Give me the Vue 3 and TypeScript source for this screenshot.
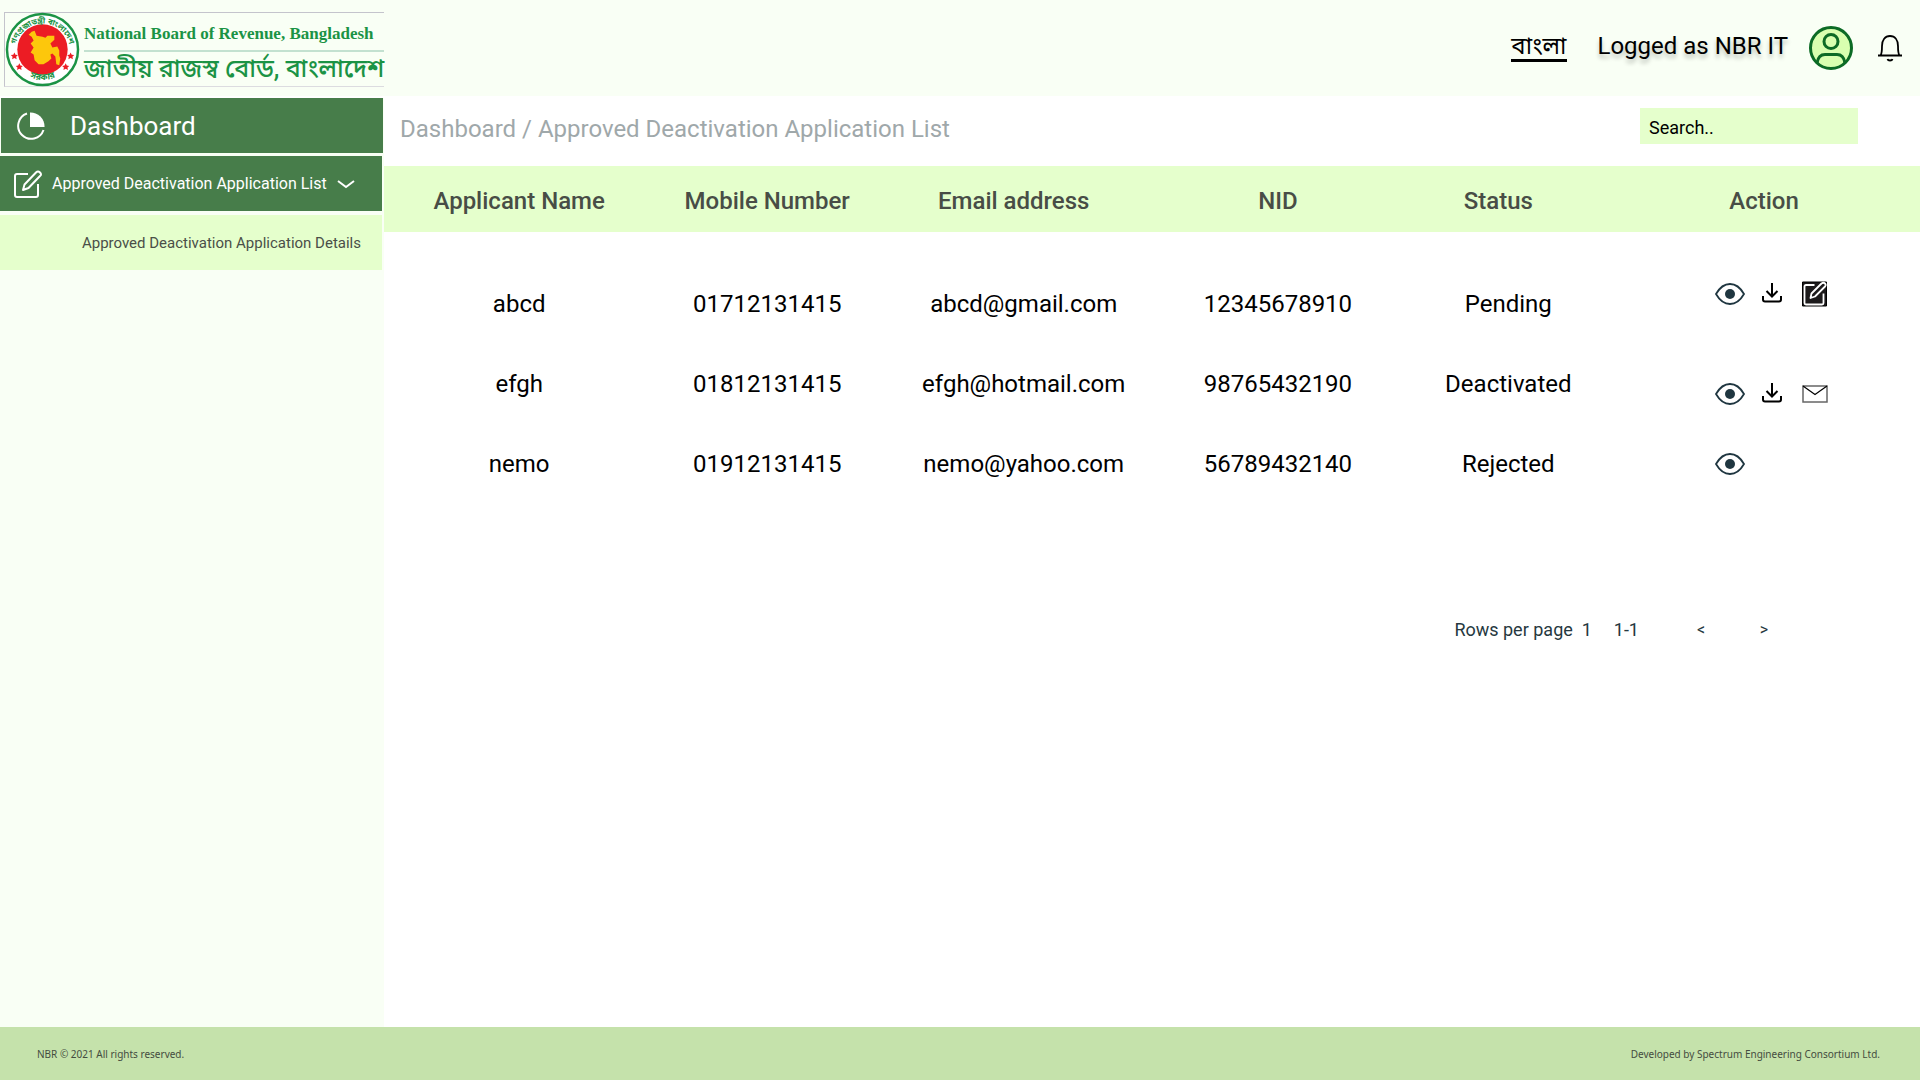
<script setup lang="ts">
import { ref } from 'vue'

type Action = 'view' | 'download' | 'edit' | 'mail'

interface Application {
  name: string
  mobile: string
  email: string
  nid: string
  status: string
  actions: Action[]
  align: 'top' | 'middle' | 'bottom'
}

const search = ref('')
const rowsPerPage = ref(1)

const applications: Application[] = [
  { name: 'abcd', mobile: '01712131415', email: 'abcd@gmail.com', nid: '12345678910', status: 'Pending', actions: ['view', 'download', 'edit'], align: 'top' },
  { name: 'efgh', mobile: '01812131415', email: 'efgh@hotmail.com', nid: '98765432190', status: 'Deactivated', actions: ['view', 'download', 'mail'], align: 'bottom' },
  { name: 'nemo', mobile: '01912131415', email: 'nemo@yahoo.com', nid: '56789432140', status: 'Rejected', actions: ['view'], align: 'middle' },
]
</script>

<template>
  <div class="page">
    <header class="topbar">
      <a class="logo" href="#" aria-label="National Board of Revenue">
        <svg class="emblem" viewBox="0 0 76 76" aria-hidden="true">
          <defs>
            <path id="arc-top" d="M10.500 45A28 28 0 1 1 65.500 45" />
            <path id="arc-bottom" d="M14 58A32 32 0 0 0 62 58" />
          </defs>
          <circle cx="38" cy="38" r="36" fill="#fff" stroke="#1b9345" stroke-width="2.500" />
          <circle cx="38" cy="38" r="25.500" fill="#ec1c24" />
          <path
            fill="#fdc70c"
            d="M27 20l3-1 2 5 6 1 3 1 2-2 7 0 0 4-4 4 2 4 5-1 2 4 0 5 1 3-1 7-3-1-1-8-3-3-2 1 1 4-3 3-5 3-5 0-4-4-1-6-3-2 3-5-3-4 3-3-2-4-3-2z"
          />
          <g fill="#ec1c24">
            <path id="star" d="M9.500 41l1.100 2.300 2.500.3-1.800 1.700.5 2.500-2.300-1.200-2.300 1.200.5-2.500-1.800-1.700 2.500-.3z" />
            <use href="#star" x="5" y="11" />
            <use href="#star" x="57" />
            <use href="#star" x="52" y="11" />
          </g>
          <g class="emblem-text" fill="#1b9345" text-anchor="middle">
            <text font-size="8"><textPath href="#arc-top" startOffset="50%">গণপ্রজাতন্ত্রী বাংলাদেশ</textPath></text>
            <text font-size="9"><textPath href="#arc-bottom" startOffset="50%">সরকার</textPath></text>
          </g>
        </svg>
        <span class="logo-names">
          <span class="logo-en">National Board of Revenue, Bangladesh</span>
          <span class="logo-bn" lang="bn">জাতীয় রাজস্ব বোর্ড, বাংলাদেশ</span>
        </span>
      </a>
      <div class="account">
        <a class="language" href="#" lang="bn">বাংলা</a>
        <span class="user">Logged as NBR IT</span>
        <button class="icon-button avatar" type="button" aria-label="Profile">
          <svg width="44" height="44" viewBox="0 0 44 44" fill="none" stroke="#0c6b25" stroke-width="3">
            <circle cx="22" cy="22" r="20.500" fill="#d9ffb0" />
            <circle cx="22" cy="15.500" r="7" />
            <path d="M8 37C9 31 12 28.500 16 28.500H28C32 28.500 35 31 36 37" />
          </svg>
        </button>
        <button class="icon-button" type="button" aria-label="Notifications">
          <svg width="26" height="28" viewBox="0 0 26 28" fill="none" stroke="#000" stroke-width="1.800">
            <path d="M1 21.500H25M3.500 21.500C5 19.500 5 17 5 12C5 6 8 2 13 2S21 6 21 12C21 17 21 19.500 22.500 21.500" />
            <path d="M10.500 25C11 27 15 27 15.500 25" />
          </svg>
        </button>
      </div>
    </header>

    <div class="body">
      <nav class="sidebar">
        <a class="nav-item nav-dashboard" href="#">
          <svg width="28" height="28" viewBox="0 0 28 28" aria-hidden="true">
            <path d="M10 1.500A13 13 0 1 0 26.500 18" fill="none" stroke="#fff" stroke-width="2" />
            <path d="M13 0.500A14 14 0 0 1 27.500 15H13z" fill="#fff" />
          </svg>
          Dashboard
        </a>
        <a class="nav-item nav-list" href="#">
          <svg width="28" height="28" viewBox="0 0 28 28" fill="none" stroke="#fff" stroke-width="2" stroke-linejoin="round" aria-hidden="true">
            <path d="M14 4H3Q1 4 1 6V25Q1 27 3 27H22Q24 27 24 25V14" />
            <path d="M9 20L10.500 14.500L22 2.500Q24 .5 26 2.500T26 6L14.500 18z" />
          </svg>
          <span>Approved Deactivation Application List</span>
          <svg width="18" height="10" viewBox="0 0 18 10" fill="none" stroke="#fff" stroke-width="2" aria-hidden="true">
            <path d="M1 2L9 8L17 2" />
          </svg>
        </a>
        <a class="nav-item nav-details" href="#">Approved Deactivation Application Details</a>
      </nav>

      <main class="content">
        <div class="toolbar">
          <h1 class="breadcrumb">Dashboard / Approved Deactivation Application List</h1>
          <input v-model="search" class="search" type="text" placeholder="Search.." aria-label="Search" />
        </div>

        <table class="applications">
          <colgroup>
            <col class="col-name" />
            <col class="col-mobile" />
            <col class="col-email" />
            <col class="col-nid" />
            <col class="col-status" />
            <col class="col-action" />
          </colgroup>
          <thead>
            <tr>
              <th scope="col">Applicant Name</th>
              <th scope="col">Mobile Number</th>
              <th scope="col" class="inset">Email address</th>
              <th scope="col">NID</th>
              <th scope="col" class="inset">Status</th>
              <th scope="col" class="inset">Action</th>
            </tr>
          </thead>
          <tbody>
            <tr v-for="row in applications" :key="row.nid">
              <td>{{ row.name }}</td>
              <td>{{ row.mobile }}</td>
              <td>{{ row.email }}</td>
              <td>{{ row.nid }}</td>
              <td>{{ row.status }}</td>
              <td class="action-cell" :class="row.align">
                <div class="actions">
                  <button v-for="action in row.actions" :key="action" class="icon-button" type="button" :aria-label="action">
                    <svg v-if="action === 'view'" width="30" height="24" viewBox="0 0 30 24" fill="none" stroke="#1f3640" stroke-width="1.800">
                      <path d="M1 12C5 5 10 2 15 2S25 5 29 12C25 19 20 22 15 22S5 19 1 12z" />
                      <circle cx="15" cy="12" r="5" fill="#1f3640" stroke="none" />
                    </svg>
                    <svg v-else-if="action === 'download'" width="23" height="22" viewBox="0 0 23 22" fill="none" stroke="#000" stroke-width="2">
                      <path d="M10 0V13M4.500 8L10 13.500L15.500 8M1 13V16.500Q1 18.500 3 18.500H17Q19 18.500 19 16.500V13" />
                    </svg>
                    <svg v-else-if="action === 'edit'" width="26" height="26" viewBox="0 0 26 26" fill="none" stroke="#fff" stroke-width="1.800" stroke-linejoin="round">
                      <rect width="24" height="24" fill="#1c1a1b" stroke="#000" stroke-width="1" x=".5" y="1" />
                      <path d="M12.500 4H4Q2.500 4 2.500 5.500V22Q2.500 23.500 4 23.500H20Q21.500 23.500 21.500 22V12.500" />
                      <path d="M8.500 17L9.500 12.500L19.500 2.500Q21.500 1 23 2.500T23 5.500L13 15.500z" />
                    </svg>
                    <svg v-else width="26" height="18" viewBox="0 0 26 18" fill="none" stroke="#000">
                      <rect x="1" y="1" width="24" height="16" stroke="#666" stroke-width="1.500" />
                      <path d="M1 1L13 9.500L25 1" stroke-width="1.200" />
                    </svg>
                  </button>
                </div>
              </td>
            </tr>
          </tbody>
        </table>

        <div class="pagination">
          <label for="rows-per-page">Rows per page</label>
          <select id="rows-per-page" v-model="rowsPerPage">
            <option :value="1">1</option>
          </select>
          <span class="range">1-1</span>
          <button class="pager" type="button" aria-label="Previous page">&lt;</button>
          <button class="pager" type="button" aria-label="Next page">&gt;</button>
        </div>
      </main>
    </div>

    <footer class="footer">
      <span>NBR © 2021 All rights reserved.</span>
      <span>Developed by Spectrum Engineering Consortium Ltd.</span>
    </footer>
  </div>
</template>

<style>
body {
  background: #fff;
}
</style>

<style scoped>
.page {
  display: flex;
  flex-direction: column;
  min-height: 100vh;
  font-family: Roboto, "Noto Sans Bengali", "Noto Sans", sans-serif;
  font-size: 24px;
  color: #000;
}
.page * {
  box-sizing: border-box;
}
a {
  color: inherit;
  text-decoration: none;
}
svg {
  display: block;
  flex: none;
}
.icon-button {
  padding: 0;
  border: 0;
  background: none;
  cursor: pointer;
}
.topbar {
  display: flex;
  justify-content: space-between;
  height: 96px;
  background: #f9fff5;
}
.logo {
  display: flex;
  align-items: center;
  width: 380px;
  height: 75px;
  margin: 12px 0 0 4px;
  border: 1px solid #c4c4cc;
  border-right: 0;
  border-bottom-color: #dcdce0;
  color: #1b9345;
}
.emblem {
  width: 75px;
  height: 75px;
}
.emblem-text {
  font-family: "Noto Sans Bengali", sans-serif;
  font-weight: 700;
}
.logo-names {
  display: flex;
  flex: 1;
  flex-direction: column;
  min-width: 0;
  margin-left: 4px;
  white-space: nowrap;
}
.logo-en {
  padding-top: 4px;
  border-bottom: 2px solid #c3e1d0;
  font: 700 17px/32px "Liberation Serif", serif;
}
.logo-bn {
  font-size: 25px;
  font-weight: 500;
  line-height: 34px;
}
.account {
  display: flex;
  align-items: center;
  padding-right: 17px;
}
.language {
  margin-right: 31px;
  border-bottom: 3px solid #000;
  line-height: 25px;
}
.user {
  margin-right: 21px;
  padding-bottom: 4px;
  text-shadow: 0 4px 4px rgba(0, 0, 0, 0.25);
}
.avatar {
  margin-right: 24px;
}
.body {
  display: flex;
  flex: 1;
}
.sidebar {
  display: flex;
  flex: none;
  flex-direction: column;
  width: 384px;
  border-top: 2px solid #fff;
  background: #f9fff5;
}
.nav-item {
  display: flex;
  align-items: center;
  height: 55px;
  margin-right: 2px;
  background: #477d4a;
  color: #fff;
}
.nav-dashboard {
  gap: 25px;
  margin: 0 1px 3px;
  padding-left: 16px;
  font-size: 26px;
}
.nav-list {
  gap: 10px;
  margin-bottom: 4px;
  padding-left: 14px;
  font-size: 16px;
}
.nav-details {
  justify-content: flex-end;
  padding-right: 21px;
  background: #e5ffcc;
  color: #4a4f48;
  font-size: 15px;
}
.content {
  flex: 1;
  min-width: 0;
}
.toolbar {
  display: flex;
  align-items: center;
  justify-content: space-between;
  height: 70px;
  padding: 0 62px 10px 16px;
}
.breadcrumb {
  margin: 0;
  padding-top: 6px;
  color: #9fa8aa;
  font-size: 24px;
  font-weight: 400;
}
.search {
  width: 218px;
  height: 36px;
  padding: 2px 9px 0;
  border: 0;
  border-radius: 0;
  background: #e5ffcc;
  color: #000;
  font: 18px Roboto, sans-serif;
}
.search::placeholder {
  color: #000;
  opacity: 1;
}
.applications {
  width: 100%;
  border-collapse: collapse;
  table-layout: fixed;
}
.col-name { width: 17.6%; }
.col-mobile { width: 14.7%; }
.col-email { width: 18.7%; }
.col-nid { width: 14.4%; }
.col-status { width: 15.6%; }
.col-action { width: 19%; }
th {
  height: 66px;
  padding: 4px 0 0;
  background: #e5ffcc;
  color: #484d46;
  font-weight: 500;
}
th.inset {
  padding-right: 20px;
}
tbody::before {
  display: block;
  height: 32px;
  content: "";
}
td {
  height: 80px;
  padding: 0;
  text-align: center;
}
.action-cell {
  padding: 16px 0 16px 87px;
}
.top { vertical-align: top; }
.middle { vertical-align: middle; }
.bottom { vertical-align: bottom; }
.actions {
  display: flex;
  align-items: center;
  gap: 17px;
  height: 28px;
}
.pagination {
  display: flex;
  align-items: center;
  justify-content: flex-end;
  margin-top: 114px;
  padding-right: 144px;
  color: #263840;
  font-size: 18px;
  line-height: 24px;
}
select {
  width: 12px;
  margin: 0 20px 0 9px;
  padding: 0;
  border: 0;
  background: none;
  color: inherit;
  font: inherit;
  appearance: none;
}
.range {
  margin-right: 50px;
}
.pager {
  width: 24px;
  padding: 0;
  border: 0;
  background: none;
  color: inherit;
  font: 16px/24px Roboto, sans-serif;
}
.pager + .pager {
  margin-left: 39px;
}
.footer {
  display: flex;
  align-items: center;
  justify-content: space-between;
  height: 53px;
  padding: 0 40px 0 37px;
  background: #c5e2ab;
  color: #444c40;
  font-family: "Noto Sans", sans-serif;
  font-size: 10px;
}
</style>
